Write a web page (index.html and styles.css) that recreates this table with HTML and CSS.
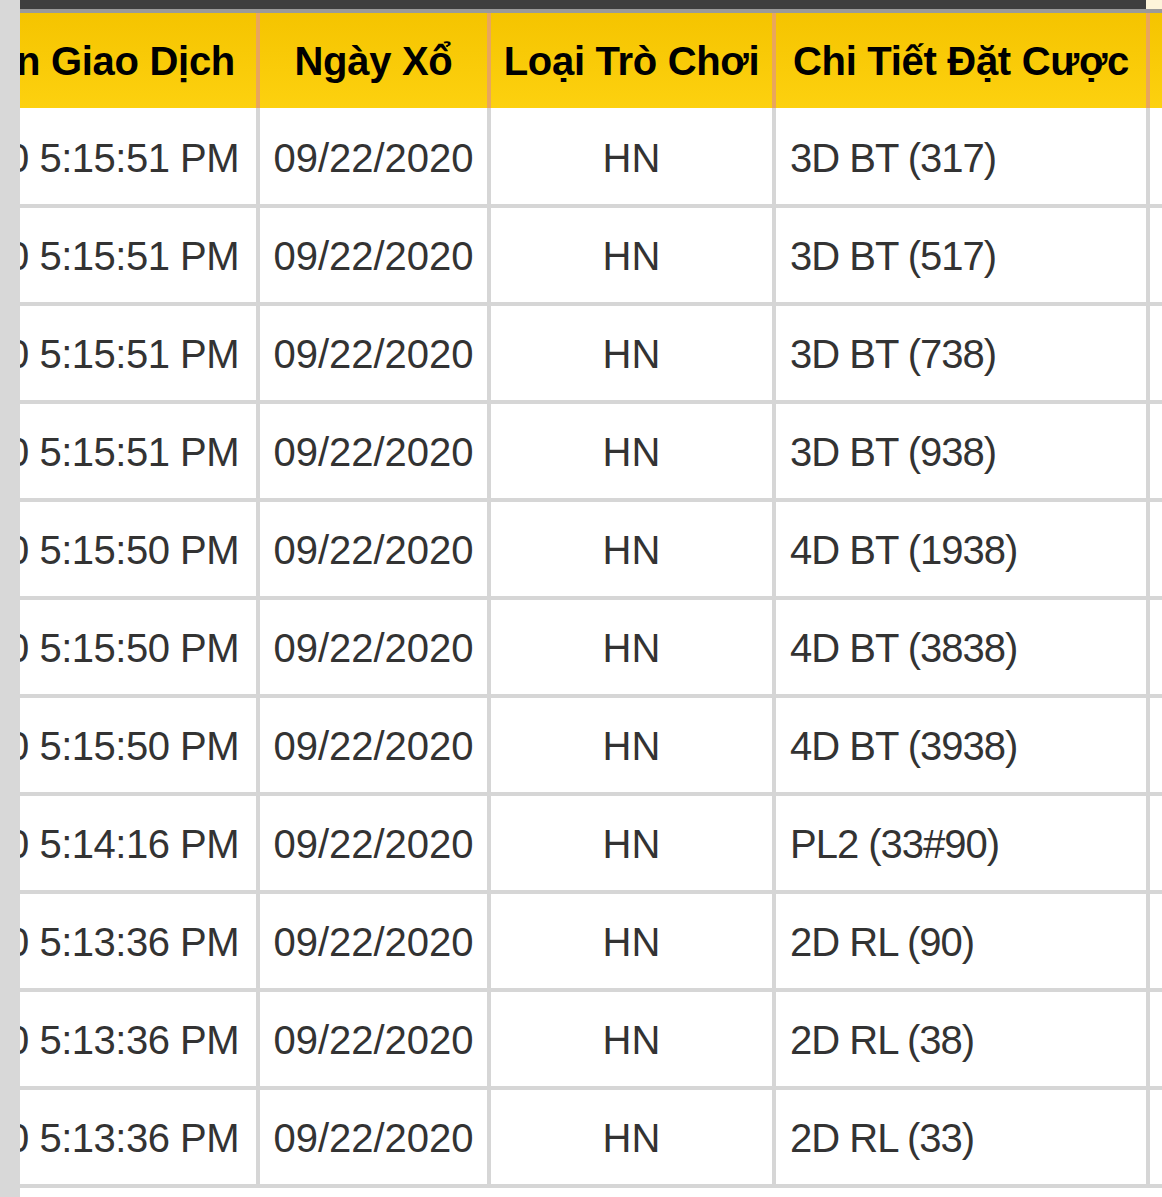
FILE: index.html
```html
<!DOCTYPE html>
<html lang="vi">
<head>
<meta charset="utf-8">
<title>Lịch sử đặt cược</title>
<link rel="stylesheet" href="styles.css">
</head>
<body>
<div class="page">
  <div class="gutter"></div>
  <div class="main">
    <div class="topbar">
      <div class="topbar-dark"></div>
      <div class="topbar-light"></div>
    </div>
    <div class="topline"></div>
    <div class="viewport">
      <div class="grid">
        <div class="th th-time">Thời Gian Giao Dịch</div>
        <div class="th">Ngày Xổ</div>
        <div class="th">Loại Trò Chơi</div>
        <div class="th">Chi Tiết Đặt Cược</div>
        <div class="th th-extra"></div>

        <div class="td first c-time">09/22/2020 5:15:51 PM</div>
        <div class="td first c-center">09/22/2020</div>
        <div class="td first c-center">HN</div>
        <div class="td first c-left">3D BT (317)</div>
        <div class="td first c-extra"></div>

        <div class="td c-time">09/22/2020 5:15:51 PM</div>
        <div class="td c-center">09/22/2020</div>
        <div class="td c-center">HN</div>
        <div class="td c-left">3D BT (517)</div>
        <div class="td c-extra"></div>

        <div class="td c-time">09/22/2020 5:15:51 PM</div>
        <div class="td c-center">09/22/2020</div>
        <div class="td c-center">HN</div>
        <div class="td c-left">3D BT (738)</div>
        <div class="td c-extra"></div>

        <div class="td c-time">09/22/2020 5:15:51 PM</div>
        <div class="td c-center">09/22/2020</div>
        <div class="td c-center">HN</div>
        <div class="td c-left">3D BT (938)</div>
        <div class="td c-extra"></div>

        <div class="td c-time">09/22/2020 5:15:50 PM</div>
        <div class="td c-center">09/22/2020</div>
        <div class="td c-center">HN</div>
        <div class="td c-left">4D BT (1938)</div>
        <div class="td c-extra"></div>

        <div class="td c-time">09/22/2020 5:15:50 PM</div>
        <div class="td c-center">09/22/2020</div>
        <div class="td c-center">HN</div>
        <div class="td c-left">4D BT (3838)</div>
        <div class="td c-extra"></div>

        <div class="td c-time">09/22/2020 5:15:50 PM</div>
        <div class="td c-center">09/22/2020</div>
        <div class="td c-center">HN</div>
        <div class="td c-left">4D BT (3938)</div>
        <div class="td c-extra"></div>

        <div class="td c-time">09/22/2020 5:14:16 PM</div>
        <div class="td c-center">09/22/2020</div>
        <div class="td c-center">HN</div>
        <div class="td c-left">PL2 (33#90)</div>
        <div class="td c-extra"></div>

        <div class="td c-time">09/22/2020 5:13:36 PM</div>
        <div class="td c-center">09/22/2020</div>
        <div class="td c-center">HN</div>
        <div class="td c-left">2D RL (90)</div>
        <div class="td c-extra"></div>

        <div class="td c-time">09/22/2020 5:13:36 PM</div>
        <div class="td c-center">09/22/2020</div>
        <div class="td c-center">HN</div>
        <div class="td c-left">2D RL (38)</div>
        <div class="td c-extra"></div>

        <div class="td c-time">09/22/2020 5:13:36 PM</div>
        <div class="td c-center">09/22/2020</div>
        <div class="td c-center">HN</div>
        <div class="td c-left">2D RL (33)</div>
        <div class="td c-extra"></div>
      </div>
    </div>
  </div>
</div>
</body>
</html>
```

FILE: styles.css
```css
html, body {
  margin: 0;
  padding: 0;
  background: #ffffff;
}

body {
  font-family: "Liberation Sans", Arial, Helvetica, sans-serif;
}

.page {
  display: flex;
  height: 100vh;
  overflow: hidden;
}

.gutter {
  width: 20px;
  flex: 0 0 20px;
  background: #d8d8d8;
}

.main {
  flex: 1;
  min-width: 0;
  display: flex;
  flex-direction: column;
  overflow: hidden;
}

.topbar {
  display: flex;
  height: 9px;
  flex: 0 0 9px;
}

.topbar-dark {
  width: 1126px;
  background: #3f3f3f;
}

.topbar-light {
  flex: 1;
  background: #fdf4da;
}

.topline {
  height: 4px;
  flex: 0 0 4px;
  background: #9a9a9a;
}

.viewport {
  flex: 1;
  overflow: hidden;
}

.grid {
  display: grid;
  grid-template-columns: 450px 231px 285px 374px 240px;
  grid-auto-rows: auto;
  margin-left: -210px;
  width: max-content;
}

.th {
  box-sizing: border-box;
  height: 95px;
  display: flex;
  align-items: center;
  justify-content: center;
  background: linear-gradient(#f5c400, #fdd10f);
  border-right: 4px solid #e9a65c;
  font-weight: bold;
  font-size: 40px;
  letter-spacing: -0.3px;
  color: #000;
  white-space: nowrap;
  padding-top: 2px;
}

.th-time {
  justify-content: flex-end;
  padding-right: 21px;
}

.th-extra {
  border-right: none;
}

.td {
  box-sizing: border-box;
  height: 98px;
  display: flex;
  align-items: center;
  border-right: 4px solid #d6d6d6;
  border-bottom: 4px solid #d6d6d6;
  font-size: 40px;
  color: #333333;
  white-space: nowrap;
  padding-top: 3px;
}

.td.first {
  height: 100px;
  padding-top: 5px;
}

.c-time {
  justify-content: flex-end;
  padding-right: 17px;
  letter-spacing: -0.5px;
}

.c-center {
  justify-content: center;
}

.c-left {
  justify-content: flex-start;
  padding-left: 14px;
  letter-spacing: -1px;
}

.c-extra {
  border-right: none;
}
```
